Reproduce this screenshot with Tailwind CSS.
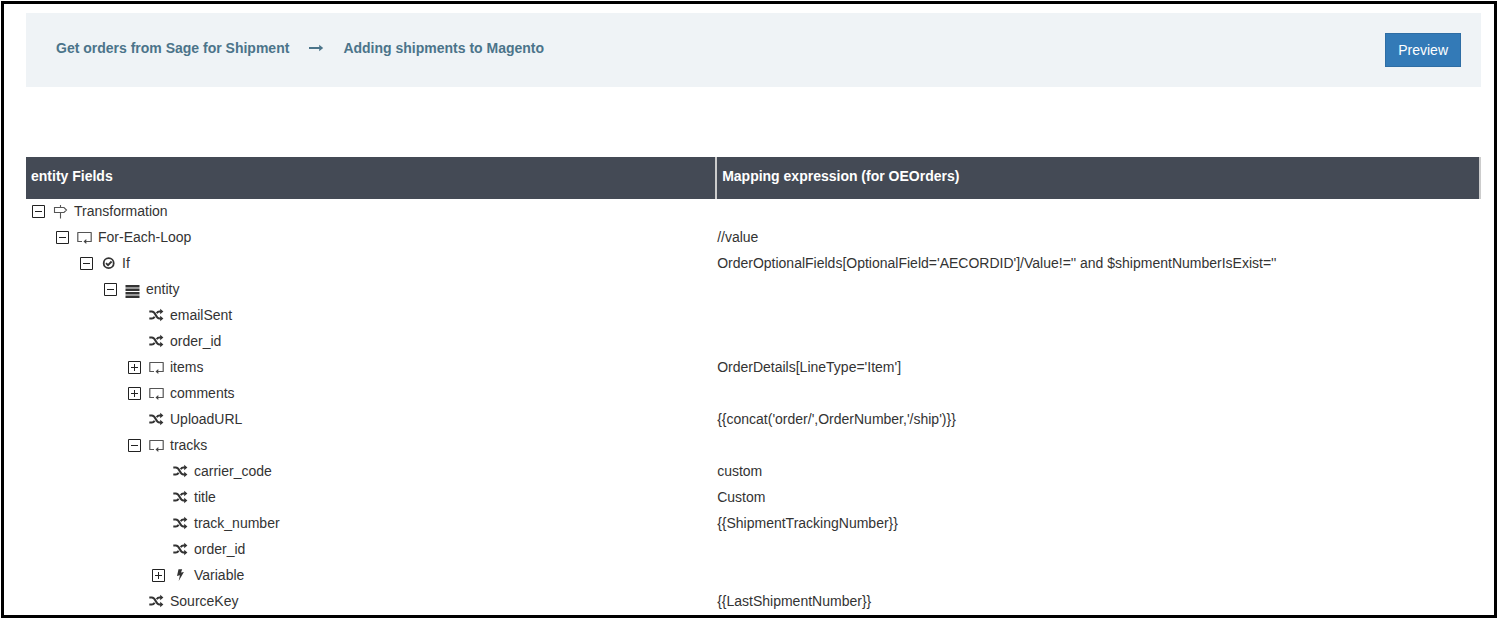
<!DOCTYPE html>
<html lang="en">
<head>
<meta charset="utf-8">
<meta name="viewport" content="width=device-width, initial-scale=1">
<title>Mapping</title>
<script src="https://cdn.jsdelivr.net/npm/@tailwindcss/browser@4"></script>
</head>
<body class="bg-white pt-px pl-px font-['Liberation_Sans',Arial,sans-serif] text-sm text-[#333]">
<svg class="hidden" aria-hidden="true">
  <symbol id="minus" viewBox="0 0 13 13"><path d="M.5.5h12v12H.5zM3 6.5h7" fill="none" stroke="#222"/></symbol>
  <symbol id="plus" viewBox="0 0 13 13"><path d="M.5.5h12v12H.5zM3 6.5h7M6.5 3v7" fill="none" stroke="#222"/></symbol>
  <symbol id="sign" viewBox="0 -2 16 18"><path d="M1.500 3.500H11L13.500 6 11 8.500H1.500zM7.500 1v2.500M7.500 8.500v6" fill="none" stroke="#555" stroke-width="1.100"/></symbol>
  <symbol id="loop" viewBox="0 -2 16 18"><path d="M5 11.500H.8V2.500h13.400v9H9" fill="none" stroke="#555" stroke-width="1.200" stroke-linejoin="round"/><path d="M6.500 11.500L9.300 9v5z" fill="#444"/></symbol>
  <symbol id="check" viewBox="0 -2 16 18"><circle cx="7.7" cy="7.200" r="5" fill="none" stroke="#333" stroke-width="1.800"/><path d="M5 7.200l2 2 3.600-3.700" fill="none" stroke="#333" stroke-width="1.800"/></symbol>
  <symbol id="bars" viewBox="0 -2 16 18"><path d="M.5 2.900h14v2.600H.5zM.5 6.400h14V9H.5zM.5 9.900h14v2.600H.5zM.5 13.400h14V16H.5z" fill="#333"/></symbol>
  <symbol id="shuffle" viewBox="0 -2 16 18"><path d="M.3 3.500H2.800C4.500 3.500 5.500 4.500 6.700 7S8.700 10.500 10.500 10.500H12M.3 10.500H2.800C4.100 10.500 4.900 10 5.600 8.800M7.700 5.200C8.400 4 9.200 3.500 10.500 3.500H12" fill="none" stroke="#333" stroke-width="2"/><path d="M11.200 .8L14.400 3.500 11.200 6.200zM11.200 7.800L14.400 10.500 11.200 13.200z" fill="#333"/></symbol>
  <symbol id="bolt" viewBox="0 -2 16 18"><path d="M5.500 1.300h3.700L8 4.600l2.900-.6L5.700 12.900 6.900 7.300l-2.900.6z" fill="#333"/></symbol>
</svg>
<main class="border-[3px] border-black pt-[9px] pr-[13px] pl-[22px]">
  <header class="flex items-start justify-between bg-[#eff3f6] px-5 py-5">
    <h1 class="flex items-center pl-[10px] font-bold leading-[30px] text-[#4b748a]">
      <span>Get orders from Sage for Shipment</span>
      <svg class="mr-[19px] ml-5 h-4 w-[15px]" viewBox="0 0 15 16" role="img" aria-label="to"><path d="M0 7h10.200V4.800L14.200 8l-4 3.200V9H0z" fill="#4b748a"/></svg>
      <span>Adding shipments to Magento</span>
    </h1>
    <button type="button" class="border border-[#2e6da4] bg-[#337ab7] px-3 py-[6px] leading-5 text-white">Preview</button>
  </header>
  <table class="mt-[70px] w-full table-fixed border-collapse text-left leading-5">
    <thead>
      <tr class="h-[42px] bg-[#444a55] text-white">
        <th scope="col" class="w-[47.5%] p-0"><div class="h-[42px] border-r-2 border-[#ccc] px-[5px] py-[9px]">entity Fields</div></th>
        <th scope="col" class="p-0"><div class="h-[42px] border-r-2 border-[#ccc] px-[5px] py-[9px]">Mapping expression (for OEOrders)</div></th>
      </tr>
    </thead>
    <tbody>
      <tr class="h-[26px]"><td class="px-0 pt-0 pb-[2px]"><div class="flex items-center pl-[6px]"><button type="button" aria-label="Collapse Transformation" class="mr-2"><svg class="size-[13px]"><use href="#minus"/></svg></button><svg class="mr-[5px] h-[18px] w-4"><use href="#sign"/></svg><span>Transformation</span></div></td><td class="px-0 pt-0 pb-[2px]"></td></tr>
      <tr class="h-[26px]"><td class="px-0 pt-0 pb-[2px]"><div class="flex items-center pl-[30px]"><button type="button" aria-label="Collapse For-Each-Loop" class="mr-2"><svg class="size-[13px]"><use href="#minus"/></svg></button><svg class="mr-[5px] h-[18px] w-4"><use href="#loop"/></svg><span>For-Each-Loop</span></div></td><td class="px-0 pt-0 pb-[2px]">//value</td></tr>
      <tr class="h-[26px]"><td class="px-0 pt-0 pb-[2px]"><div class="flex items-center pl-[54px]"><button type="button" aria-label="Collapse If" class="mr-2"><svg class="size-[13px]"><use href="#minus"/></svg></button><svg class="mr-[5px] h-[18px] w-4"><use href="#check"/></svg><span>If</span></div></td><td class="px-0 pt-0 pb-[2px]">OrderOptionalFields[OptionalField='AECORDID']/Value!='' and $shipmentNumberIsExist=''</td></tr>
      <tr class="h-[26px]"><td class="px-0 pt-0 pb-[2px]"><div class="flex items-center pl-[78px]"><button type="button" aria-label="Collapse entity" class="mr-2"><svg class="size-[13px]"><use href="#minus"/></svg></button><svg class="mr-[5px] h-[18px] w-4"><use href="#bars"/></svg><span>entity</span></div></td><td class="px-0 pt-0 pb-[2px]"></td></tr>
      <tr class="h-[26px]"><td class="px-0 pt-0 pb-[2px]"><div class="flex items-center pl-[123px]"><svg class="mr-[5px] h-[18px] w-4"><use href="#shuffle"/></svg><span>emailSent</span></div></td><td class="px-0 pt-0 pb-[2px]"></td></tr>
      <tr class="h-[26px]"><td class="px-0 pt-0 pb-[2px]"><div class="flex items-center pl-[123px]"><svg class="mr-[5px] h-[18px] w-4"><use href="#shuffle"/></svg><span>order_id</span></div></td><td class="px-0 pt-0 pb-[2px]"></td></tr>
      <tr class="h-[26px]"><td class="px-0 pt-0 pb-[2px]"><div class="flex items-center pl-[102px]"><button type="button" aria-label="Expand items" class="mr-2"><svg class="size-[13px]"><use href="#plus"/></svg></button><svg class="mr-[5px] h-[18px] w-4"><use href="#loop"/></svg><span>items</span></div></td><td class="px-0 pt-0 pb-[2px]">OrderDetails[LineType='Item']</td></tr>
      <tr class="h-[26px]"><td class="px-0 pt-0 pb-[2px]"><div class="flex items-center pl-[102px]"><button type="button" aria-label="Expand comments" class="mr-2"><svg class="size-[13px]"><use href="#plus"/></svg></button><svg class="mr-[5px] h-[18px] w-4"><use href="#loop"/></svg><span>comments</span></div></td><td class="px-0 pt-0 pb-[2px]"></td></tr>
      <tr class="h-[26px]"><td class="px-0 pt-0 pb-[2px]"><div class="flex items-center pl-[123px]"><svg class="mr-[5px] h-[18px] w-4"><use href="#shuffle"/></svg><span>UploadURL</span></div></td><td class="px-0 pt-0 pb-[2px]">{{concat('order/',OrderNumber,'/ship')}}</td></tr>
      <tr class="h-[26px]"><td class="px-0 pt-0 pb-[2px]"><div class="flex items-center pl-[102px]"><button type="button" aria-label="Collapse tracks" class="mr-2"><svg class="size-[13px]"><use href="#minus"/></svg></button><svg class="mr-[5px] h-[18px] w-4"><use href="#loop"/></svg><span>tracks</span></div></td><td class="px-0 pt-0 pb-[2px]"></td></tr>
      <tr class="h-[26px]"><td class="px-0 pt-0 pb-[2px]"><div class="flex items-center pl-[147px]"><svg class="mr-[5px] h-[18px] w-4"><use href="#shuffle"/></svg><span>carrier_code</span></div></td><td class="px-0 pt-0 pb-[2px]">custom</td></tr>
      <tr class="h-[26px]"><td class="px-0 pt-0 pb-[2px]"><div class="flex items-center pl-[147px]"><svg class="mr-[5px] h-[18px] w-4"><use href="#shuffle"/></svg><span>title</span></div></td><td class="px-0 pt-0 pb-[2px]">Custom</td></tr>
      <tr class="h-[26px]"><td class="px-0 pt-0 pb-[2px]"><div class="flex items-center pl-[147px]"><svg class="mr-[5px] h-[18px] w-4"><use href="#shuffle"/></svg><span>track_number</span></div></td><td class="px-0 pt-0 pb-[2px]">{{ShipmentTrackingNumber}}</td></tr>
      <tr class="h-[26px]"><td class="px-0 pt-0 pb-[2px]"><div class="flex items-center pl-[147px]"><svg class="mr-[5px] h-[18px] w-4"><use href="#shuffle"/></svg><span>order_id</span></div></td><td class="px-0 pt-0 pb-[2px]"></td></tr>
      <tr class="h-[26px]"><td class="px-0 pt-0 pb-[2px]"><div class="flex items-center pl-[126px]"><button type="button" aria-label="Expand Variable" class="mr-2"><svg class="size-[13px]"><use href="#plus"/></svg></button><svg class="mr-[5px] h-[18px] w-4"><use href="#bolt"/></svg><span>Variable</span></div></td><td class="px-0 pt-0 pb-[2px]"></td></tr>
      <tr class="h-[26px]"><td class="px-0 pt-0 pb-[2px]"><div class="flex items-center pl-[123px]"><svg class="mr-[5px] h-[18px] w-4"><use href="#shuffle"/></svg><span>SourceKey</span></div></td><td class="px-0 pt-0 pb-[2px]">{{LastShipmentNumber}}</td></tr>
    </tbody>
  </table>
</main>
</body>
</html>
